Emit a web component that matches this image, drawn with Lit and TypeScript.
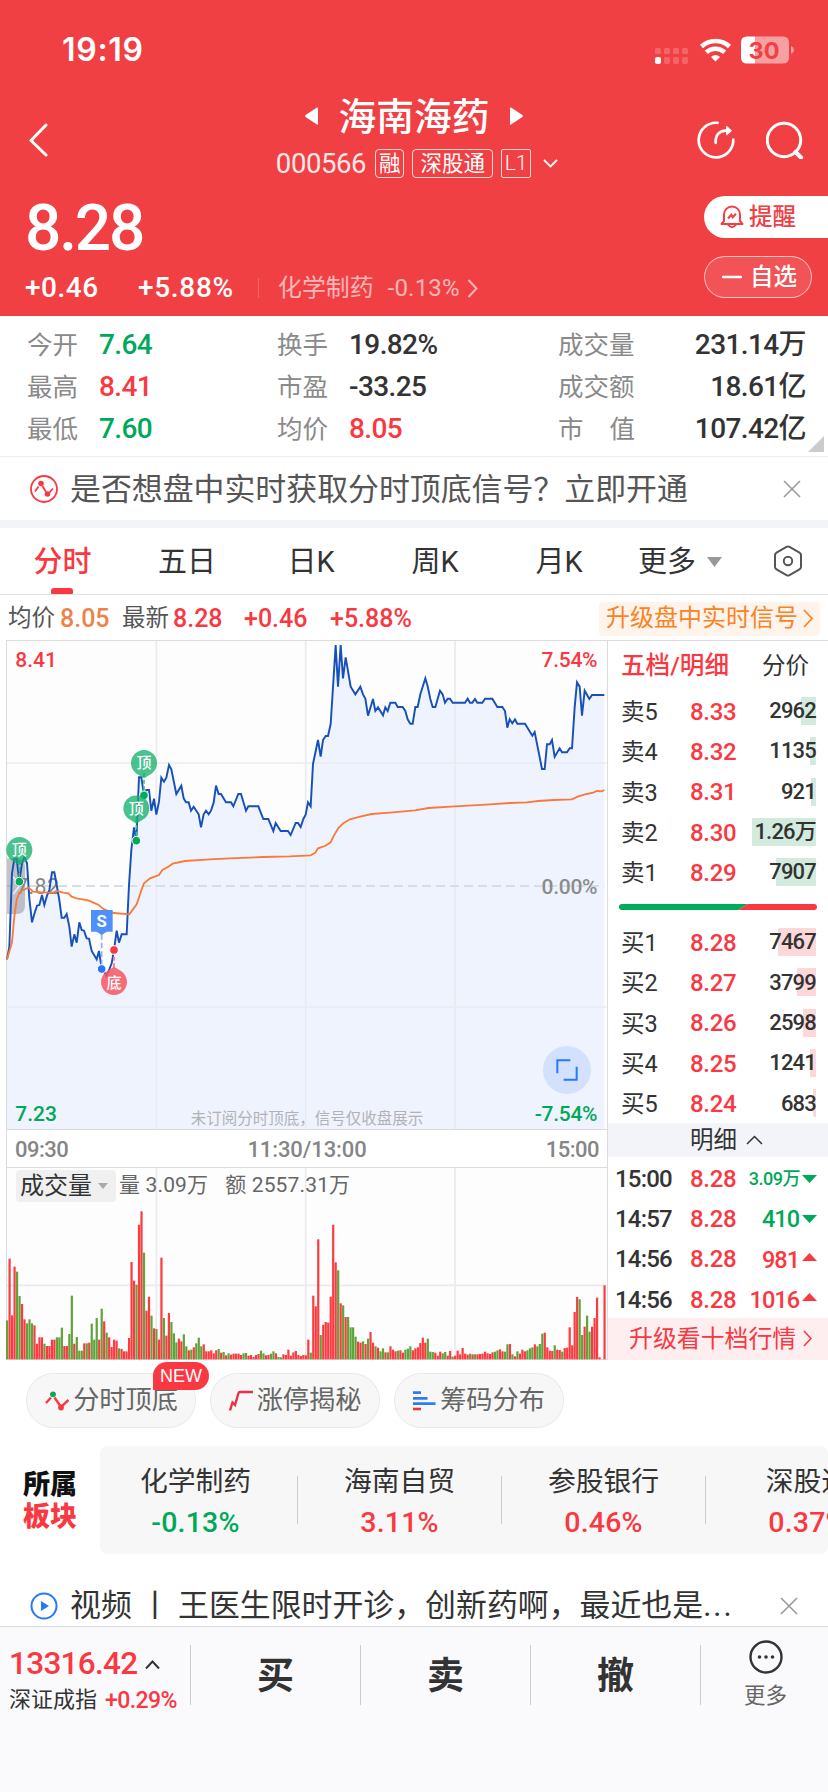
import { LitElement, html, svg, css } from "lit";
import { customElement } from "lit/decorators.js";

const PRICE =
  "21,988 28,950 36,730 43,686 50,686 58,755 66,700 73,680 81,700 88,805 96,877 103,852 111,827 118,825 126,795 133,825 141,797 148,780 156,727 163,727 170,765 178,810 185,863 193,863 200,852 208,890 215,950 223,913 230,938 238,877 245,900 252,902 260,925 267,926 275,963 290,988 297,963 305,1015 320,1038 335,1000 342,960 350,902 357,938 365,913 380,913 387,765 394,660 402,592 409,632 417,442 424,442 432,496 439,480 447,480 454,542 462,506 469,554 477,515 484,443 492,455 499,443 507,405 514,418 529,492 544,467 551,505 558,517 566,517 573,542 581,530 596,553 603,592 611,553 618,542 626,553 633,542 641,518 648,467 656,492 663,492 678,517 693,517 700,529 715,492 723,492 738,542 745,529 775,529 790,567 805,567 820,603 827,579 842,603 864,603 872,615 887,579 894,579 902,591 910,567 917,554 924,517 932,529 939,402 954,330 962,380 969,330 977,318 984,318 992,282 1007,45 1014,170 1022,45 1029,145 1037,82 1052,170 1066,193 1081,170 1089,193 1096,206 1104,257 1119,207 1126,243 1134,232 1149,256 1156,232 1163,243 1171,218 1186,218 1193,231 1208,231 1216,243 1223,268 1231,281 1238,281 1246,231 1253,231 1261,193 1276,145 1283,169 1291,207 1298,231 1306,231 1320,182 1328,193 1335,218 1343,206 1350,206 1358,218 1395,218 1403,206 1410,218 1417,218 1425,207 1432,218 1447,218 1455,206 1477,206 1492,231 1507,231 1515,243 1522,293 1529,268 1537,280 1545,268 1552,281 1575,281 1597,317 1604,306 1626,417 1634,417 1641,343 1649,343 1656,330 1664,380 1679,355 1686,367 1701,367 1709,355 1716,355 1724,232 1731,157 1739,170 1746,257 1754,182 1768,207 1776,195 1813,195";

const AVERAGE =
  "21,988 36,937 43,860 50,810 58,788 66,782 85,773 100,785 125,787 160,788 170,783 190,788 205,790 215,800 230,805 265,811 280,818 295,824 312,838 342,849 388,853 410,823 418,800 425,778 432,760 450,745 477,735 487,720 505,710 518,701 555,693 630,688 690,685 790,681 870,679 932,676 946,668 954,655 975,648 992,637 1000,620 1015,594 1030,580 1050,568 1080,560 1115,552 1170,548 1245,541 1285,534 1365,529 1470,523 1530,519 1580,517 1615,513 1660,510 1715,508 1735,499 1760,492 1780,488 1790,483 1805,484 1813,480";

/* One entry per minute: direction (r rising, g falling) and bar height. */
const VOLUME =
  "g117 r302 r132 r278 g263 g190 r166 r120 g108 g120 g108 r102 r47 r66 r66 g47 r40 r40 r59 r59 g66 g66 g95 r40 r40 g76 g191 r47 g67 g26 g26 r48 g48 r50 g107 g59 g124 r59 g152 r114 g80 r66 r37 r59 r56 g33 r31 r24 r24 r64 r292 r236 g224 r404 r444 g320 r146 r188 g131 r93 g91 r59 r305 g124 r71 r139 g112 g78 g51 r62 r54 g75 g39 r27 g29 r36 g48 g65 g39 r45 r24 r24 r27 r18 r27 g31 r20 g22 r12 g18 r14 r17 r17 r17 r13 g18 g19 r11 r13 r7 r13 r16 g26 g18 r12 r13 g17 g24 r18 g7 g6 r15 r13 r29 r11 r21 r25 r13 r10 r13 r12 r59 g20 r191 r159 r360 g73 r104 r112 r110 r188 r404 r291 g267 r168 g162 r127 g127 g96 g96 g68 r53 r50 g54 r46 g62 r82 r50 g39 r35 g24 g33 r21 g21 r39 r29 r24 g26 r27 r20 g29 g32 g39 r27 r33 r36 r49 r65 r50 g62 g23 g22 r20 r11 r23 g18 g22 r11 r25 g8 r11 r26 r15 r34 r17 r14 g17 r15 g15 r15 r16 r17 r23 r18 r16 r21 g23 g27 r30 r24 g23 g45 r46 g15 r9 g24 r17 r29 r24 g27 g33 g36 r45 g39 g46 g77 r80 r36 r26 r25 g42 r29 r28 g23 r34 r35 r96 r42 r142 r187 g180 g73 r98 g131 g83 r98 r124 r185 r6 r0 r222"
    .split(" ")
    .map((s) => ({ up: s[0] === "r", h: Number(s.slice(1)) }));

const ASKS = [
  ["卖5", "8.33", "2962", 15],
  ["卖4", "8.32", "1135", 6],
  ["卖3", "8.31", "921", 5],
  ["卖2", "8.30", "1.26万", 64],
  ["卖1", "8.29", "7907", 40],
];
const BIDS = [
  ["买1", "8.28", "7467", 38],
  ["买2", "8.27", "3799", 19],
  ["买3", "8.26", "2598", 13],
  ["买4", "8.25", "1241", 6],
  ["买5", "8.24", "683", 3],
];
const DEALS = [
  ["15:00", "8.28", "3.09万", "down", "small"],
  ["14:57", "8.28", "410", "down", ""],
  ["14:56", "8.28", "981", "up", ""],
  ["14:56", "8.28", "1016", "up", ""],
];
const SECTORS = [
  ["化学制药", "-0.13%", "green"],
  ["海南自贸", "3.11%", "red"],
  ["参股银行", "0.46%", "red"],
  ["深股通", "0.37%", "red"],
];

const base = css`
  :host {
    display: block;
    box-sizing: border-box;
    font-family: Roboto, "Noto Sans CJK SC", sans-serif;
    line-height: 1.2;
    color: #333;
  }
  * {
    box-sizing: border-box;
  }
  svg {
    display: block;
    flex: none;
  }
  .row {
    display: flex;
    align-items: center;
    white-space: nowrap;
  }
  .red {
    color: #f93842;
  }
  .green {
    color: #00a85a;
  }
`;

@customElement("stock-header")
class StockHeader extends LitElement {
  static styles = [
    base,
    css`
      :host {
        height: 316px;
        background: #f04043;
        color: #fff;
      }
      .status {
        height: 92px;
        padding: 8px 34px 0 62px;
        justify-content: space-between;
      }
      .time {
        font: 600 32px/40px Inter, sans-serif;
        letter-spacing: 0.7px;
      }
      .nav {
        display: grid;
        grid-template-columns: 1fr auto 1fr;
        align-items: center;
        height: 96px;
      }
      .back {
        padding-left: 28px;
      }
      .title {
        height: 46px;
        justify-content: center;
        gap: 20px;
        font-size: 37.8px;
        font-weight: 500;
      }
      .title span {
        padding-top: 3px;
      }
      .sub {
        height: 48px;
        padding-left: 6px;
        justify-content: center;
      }
      .code {
        font-size: 27.5px;
        letter-spacing: -0.4px;
        opacity: 0.88;
        margin-right: 9px;
      }
      .tag {
        height: 29px;
        border: 1.5px solid rgba(255, 255, 255, 0.8);
        border-radius: 4px;
        font-size: 21.5px;
        line-height: 27px;
        text-align: center;
        margin-right: 8px;
      }
      .t1 {
        width: 29px;
      }
      .t2 {
        width: 81px;
      }
      .t3 {
        width: 30px;
        font-size: 21px;
        font-weight: 300;
        border-radius: 2px;
        margin-right: 12px;
      }
      .tools {
        justify-content: flex-end;
        gap: 31px;
        padding-right: 24px;
      }
      .quote {
        display: flex;
        justify-content: space-between;
        padding-top: 8px;
      }
      .price {
        height: 64px;
        font-size: 64px;
        line-height: 66px;
        font-weight: 500;
        padding-left: 25px;
        letter-spacing: -2.2px;
      }
      .chg {
        height: 40px;
        margin-top: 8px;
        padding-left: 25px;
        font-size: 28px;
        font-weight: 500;
      }
      .amt {
        width: 113px;
        letter-spacing: 0.5px;
      }
      .pct {
        width: 120px;
        letter-spacing: 0.7px;
      }
      .sector {
        border-left: 1.5px solid rgba(255, 255, 255, 0.35);
        height: 20px;
        padding-left: 19px;
        font-size: 23.9px;
        font-weight: 400;
        opacity: 0.62;
      }
      .sector b {
        font-weight: 400;
        font-size: 24px;
        letter-spacing: 0.2px;
        margin: 0 7px 0 14px;
      }
      .pills {
        width: 124px;
        display: flex;
        flex-direction: column;
        gap: 18px;
      }
      .pill {
        height: 42px;
        font-size: 23.5px;
        font-weight: 500;
      }
      .remind {
        background: #fff;
        color: #f04043;
        border-radius: 21px 0 0 21px;
        padding-left: 16px;
        gap: 5px;
      }
      .fav {
        width: 108px;
        border: 1px solid rgba(255, 255, 255, 0.65);
        background: rgba(255, 255, 255, 0.1);
        border-radius: 21px;
        padding-left: 17px;
        gap: 8px;
      }
    `,
  ];
  render() {
    return html`
      <div class="row status">
        <span class="time">19:19</span>
        <svg width="140" height="28" viewBox="0 0 140 28">
          ${[0, 9, 18, 27].map(
            (x) => svg`
              <rect x=${x + 1} y="12" width="6" height="6" rx="1.5" fill="#fff" opacity=".2"/>
              <rect x=${x + 1} y="21" width="6" height="7" rx="2" fill="#fff" opacity=${x ? 0.2 : 1}/>`,
          )}
          <g fill="none" stroke="#fff" stroke-width="4.6">
            <path d="M47.5 10.5 A20.5 20.5 0 0 1 75.5 10.5" />
            <path d="M52.3 16.3 A13.5 13.5 0 0 1 70.7 16.3" />
          </g>
          <path d="M61.5 25.5 L57 21 Q61.5 17 66 21 Z" fill="#fff" />
          <path d="M101 .5 H129 Q135 .5 135 6.500 V21.500 Q135 27.500 129 27.500 H101 Z" fill="#fff" opacity=".5" />
          <path d="M101 .5 H93 Q87 .5 87 6.500 V21.500 Q87 27.500 93 27.500 H101 Z" fill="#fff" />
          <path d="M137 10 Q140 11.500 140 14 Q140 16.500 137 18 Z" fill="#fff" opacity=".5" />
          <text x="110" y="22.500" text-anchor="middle" font-family="Inter" font-weight="700" font-size="23.500" fill="#f04043">30</text>
        </svg>
      </div>
      <div class="nav">
        <div class="back">
          <svg width="20" height="34" viewBox="0 0 20 34">
            <path d="M18 2 L3 17.500 L18 32" fill="none" stroke="#fff" stroke-width="3" stroke-linecap="round" stroke-linejoin="round" />
          </svg>
        </div>
        <div>
          <div class="row title">
            <svg width="13" height="18" viewBox="0 0 13 18"><path d="M13 1 V17 Q13 18 12 17.400 L.6 10 Q-.3 9 .6 8 L12 .6 Q13 0 13 1Z" fill="#fff" /></svg>
            <span>海南海药</span>
            <svg width="13" height="18" viewBox="0 0 13 18"><path d="M0 1 V17 Q0 18 1 17.400 L12.400 10 Q13.300 9 12.400 8 L1 .6 Q0 0 0 1Z" fill="#fff" /></svg>
          </div>
          <div class="row sub">
            <span class="code">000566</span>
            <span class="tag t1">融</span>
            <span class="tag t2">深股通</span>
            <span class="tag t3">L1</span>
            <svg width="15" height="9" viewBox="0 0 15 9"><path d="M1 1 L7.500 7.500 L14 1" fill="none" stroke="#fff" stroke-width="1.800" /></svg>
          </div>
        </div>
        <div class="row tools">
          <svg width="38" height="38" viewBox="0 0 38 38" fill="none" stroke="#fff" stroke-width="2.700" stroke-linecap="round" stroke-linejoin="round">
            <path d="M20.500 1.800 A17.300 17.300 0 1 0 36.300 18.700" />
            <path d="M18.700 21.800 C18.300 14 22 9.800 29 9.600" />
            <path d="M29.800 5.800 L34 9.700 L29.800 13.500 Z" fill="#fff" stroke-width="1.500" />
          </svg>
          <svg width="38" height="38" viewBox="0 0 38 38" fill="none" stroke="#fff" stroke-width="3">
            <circle cx="18" cy="19" r="16.700" />
            <path d="M29.500 31 L35 36.500" stroke-width="4.200" stroke-linecap="round" />
          </svg>
        </div>
      </div>
      <div class="quote">
        <div>
          <div class="price">8.28</div>
          <div class="row chg">
            <span class="amt">+0.46</span><span class="pct">+5.88%</span>
            <span class="row sector">化学制药<b>-0.13%</b>
              <svg width="11" height="19" viewBox="0 0 11 19"><path d="M1.500 1 L9.500 9.500 L1.500 18" fill="none" stroke="#fff" stroke-width="2" /></svg>
            </span>
          </div>
        </div>
        <div class="pills">
          <div class="row pill remind">
            <svg width="24" height="26" viewBox="0 0 24 26" fill="none" stroke="#f04043" stroke-width="2">
              <path d="M4 17 V10.500 A8 8 0 0 1 20 10.500 V17 L22.500 20 H1.500 Z" stroke-linejoin="round" />
              <path d="M8 20.500 Q12 26 16 20.500" />
              <path d="M8 14.500 L11.300 10.800 L12.700 13.300 L16 9.800" />
            </svg>
            提醒
          </div>
          <div class="row pill fav">
            <svg width="20" height="4"><path d="M1 2 H19" stroke="#fff" stroke-width="2.400" stroke-linecap="round" /></svg>
            自选
          </div>
        </div>
      </div>
    `;
  }
}

@customElement("stock-chart")
class StockChart extends LitElement {
  static styles = [
    base,
    css`
      :host {
        width: 608px;
        flex: none;
        padding-left: 6px;
      }
      .times {
        height: 37px;
        border: 1px solid #dcdcdc;
        border-bottom: none;
        border-top: none;
        padding: 3px 8px 0 8px;
        justify-content: space-between;
        font-size: 22px;
        font-weight: 500;
        letter-spacing: -0.5px;
        color: #858585;
      }
      .mid {
        letter-spacing: -0.1px;
      }
      .vol {
        position: relative;
      }
      .legend {
        position: absolute;
        left: 10px;
        top: 3px;
        height: 32px;
        font-size: 21px;
        color: #666;
      }
      .pick {
        width: 100px;
        height: 32px;
        padding-left: 4px;
        gap: 6px;
        background: #f0f0f0;
        border-radius: 4px;
        font-size: 24px;
        color: #333;
        margin-right: 3px;
      }
      .amount {
        margin-left: 17px;
      }
      .legend span {
        letter-spacing: 0.15px;
      }
      text {
        font-family: Roboto, "Noto Sans CJK SC", sans-serif;
      }
    `,
  ];

  pin(x: number, y: number, dotY: number) {
    return svg`
      <path d=${`M${x} ${y + 30} V${dotY}`} stroke="#40be82" stroke-width="5" stroke-dasharray="12 8"/>
      <path d=${`M${x - 21} ${y + 33} L${x} ${y + 46} L${x + 21} ${y + 33} A39 39 0 1 0 ${x - 21} ${y + 33}Z`}
        fill="#14b06b" fill-opacity=".77"/>
      <text x=${x} y=${y + 16} text-anchor="middle" font-size="45" font-weight="500" fill="#fff">顶</text>
      <circle cx=${x} cy=${dotY} r="13" fill="#00ab5a" stroke="#fff" stroke-width="3"/>`;
  }

  render() {
    return html`
      <svg width="602" height="490" viewBox="18 30 1806 1470">
        <rect x="19.500" y="31.500" width="1803" height="1467" fill="#fdfdfe" />
        <path d=${`M21 1497 L${PRICE.replace(/ /g, " L")} V1497 Z`} fill="#eff3fe" />
        <path d="M469 32 V1498 M917 32 V1498 M1365 32 V1498 M20 399 H1820 M20 1131 H1820" fill="none" stroke="#e9ebef" stroke-width="5" />
        <path d="M20 768 H1813" stroke="#d3deeb" stroke-width="6" stroke-dasharray="27 15" stroke-dashoffset="14" />
        <rect x="19.500" y="31.500" width="1803" height="1467" fill="none" stroke="#dcdcdc" stroke-width="3" />
        <text x="48" y="791" font-size="64" letter-spacing="1.5" fill="#858585">7.82</text>
        <path d="M21 685 H50 Q75 685 75 710 V827 Q75 852 50 852 H21 Z" fill="#84868e" fill-opacity=".48" />
        <path d="M39 740 L60 765 L39 793" fill="none" stroke="#fff" stroke-opacity=".7" stroke-width="5" />
        <polyline points=${PRICE} fill="none" stroke="#1750b8" stroke-width="5.800" />
        <polyline points=${AVERAGE} fill="none" stroke="#fa7838" stroke-width="5.400" />
        ${this.pin(58, 660, 755)} ${this.pin(432, 399, 496)} ${this.pin(409, 535, 632)}
        <path d="M305 912 V1010" stroke="#8cb0f8" stroke-width="5" stroke-dasharray="17 9" />
        <path d="M273 840 H338 V905 H320 L305 915 L290 905 H273 Z" fill="#4f90fd" />
        <text x="305" y="891" text-anchor="middle" font-size="50" font-weight="700" fill="#fff">S</text>
        <circle cx="305" cy="1017" r="13" fill="#2678fa" stroke="#fff" stroke-width="3" />
        <path d="M342 960 V1015" stroke="#f97680" stroke-width="5" stroke-dasharray="12 8" />
        <path d="M321 1023 L342 1010 L363 1023 A39 39 0 1 1 321 1023Z" fill="#f75562" fill-opacity=".85" />
        <text x="342" y="1073" text-anchor="middle" font-size="45" font-weight="500" fill="#fff">底</text>
        <circle cx="342" cy="960" r="13" fill="#f93842" stroke="#fff" stroke-width="3" />
        <g font-size="63" font-weight="500">
          <text x="46" y="110" fill="#f93842">8.41</text>
          <text x="1792" y="110" text-anchor="end" letter-spacing="-.8" fill="#f93842">7.54%</text>
          <text x="1792" y="791" text-anchor="end" letter-spacing="-.8" fill="#8c8c8c">0.00%</text>
          <text x="46" y="1473" fill="#00a85a">7.23</text>
          <text x="1792" y="1473" text-anchor="end" letter-spacing="-.8" fill="#00a85a">-7.54%</text>
        </g>
        <text x="572" y="1483" font-size="46.500" fill="#b2b2b6">未订阅分时顶底，信号仅收盘展示</text>
        <circle cx="1701" cy="1320" r="72" fill="#d3e0fe" />
        <path d="M1672 1330 V1291 H1711 M1730 1310 V1349 H1691" fill="none" stroke="#2678fa" stroke-width="6" />
      </svg>
      <div class="row times"><span>09:30</span><span class="mid">11:30/13:00</span><span>15:00</span></div>
      <div class="vol">
        <svg width="602" height="193" viewBox="18 0 1806 579">
          <rect x="19.500" y="1.500" width="1803" height="576" fill="#fdfdfe" stroke="#dcdcdc" stroke-width="3" />
          <path d="M469 3 V578 M917 3 V578 M1365 3 V578 M20 355 H1820" stroke="#ebebed" stroke-width="5" />
          ${VOLUME.map(
            (v, i) => svg`<rect x=${18 + i * 7.468} y=${577 - v.h} width="6.6" height=${v.h}
              fill=${v.up ? "#fb3b40" : "#5fa33a"}/>`,
          )}
        </svg>
        <div class="row legend">
          <div class="row pick">成交量
            <svg width="10" height="6"><path d="M0 0 H10 L5 6Z" fill="#aaa" /></svg>
          </div>
          <span>量 3.09万</span><span class="amount">额 2557.31万</span>
        </div>
      </div>
    `;
  }
}

@customElement("order-book")
class OrderBook extends LitElement {
  static styles = [
    base,
    css`
      :host {
        flex: none;
        width: 220px;
        height: 720px;
        border-top: 1px solid #dcdcdc;
        background: #fff;
      }
      .head {
        height: 50px;
        padding: 0 19px 0 13px;
        justify-content: space-between;
        font-size: 23.5px;
      }
      .head b {
        font-weight: 500;
        font-size: 24.6px;
      }
      .line {
        height: 40.3px;
        padding-right: 12px;
      }
      .name {
        flex: none;
        width: 82px;
        padding: 2px 0 0 13px;
        font-size: 23.5px;
      }
      .px {
        flex: none;
        width: 60px;
        padding-top: 2px;
        font-size: 24px;
        font-weight: 500;
        letter-spacing: -0.3px;
      }
      .qty {
        flex: 1;
        min-width: 0;
        height: 28px;
        display: flex;
        align-items: center;
        justify-content: flex-end;
        font-size: 22px;
        font-weight: 500;
        letter-spacing: -0.8px;
      }
      .ask,
      .bid {
        background: linear-gradient(#d2ebde, #d2ebde) right / var(--w) 100% no-repeat;
      }
      .bid {
        padding-top: 1px;
        background-image: linear-gradient(#fdd8da, #fdd8da);
      }
      .ratio {
        height: 29.5px;
        padding: 0 11px;
      }
      .band {
        height: 33.5px;
        justify-content: center;
        padding-left: 17px;
        gap: 9px;
        background: #f3f4f9;
        font-size: 23.5px;
      }
      .deals {
        height: 161px;
        padding-top: 2px;
      }
      .clock {
        flex: none;
        width: 82px;
        padding-left: 7px;
        font-size: 24px;
        font-weight: 500;
        letter-spacing: -0.8px;
      }
      .deals .px {
        padding-top: 0;
      }
      .deals .line {
        padding-right: 11px;
      }
      .deals .qty {
        gap: 3px;
        font-size: 23.5px;
        letter-spacing: -1px;
      }
      .deals .small {
        gap: 2px;
        font-size: 18px;
        letter-spacing: -0.5px;
      }
      .up svg {
        margin-bottom: 6px;
      }
      .more {
        height: 42px;
        padding-left: 21px;
        gap: 7px;
        background: #feeef0;
        font-size: 23.9px;
      }
    `,
  ];
  level(rows: any[], kind: string) {
    return rows.map(
      ([n, p, q, w]) => html`
        <div class="row line">
          <span class="name">${n}</span><span class="px red">${p}</span>
          <span class="qty ${kind}" style="--w:${w}px">${q}</span>
        </div>`,
    );
  }
  render() {
    return html`
      <div class="row head"><b class="red">五档/明细</b><span>分价</span></div>
      ${this.level(ASKS, "ask")}
      <div class="row ratio">
        <svg width="198" height="6" viewBox="0 0 198 6">
          <path d="M3 0 H129 L119 6 H3 A3 3 0 0 1 3 0Z" fill="#00ab5a" />
          <path d="M129 0 H195 A3 3 0 0 1 195 6 H119Z" fill="#f93842" />
        </svg>
      </div>
      ${this.level(BIDS, "bid")}
      <div class="row band">明细
        <svg width="17" height="10" viewBox="0 0 17 10"><path d="M1 9 L8.500 1.500 L16 9" fill="none" stroke="#333" stroke-width="1.500" /></svg>
      </div>
      <div class="deals">
        ${DEALS.map(
          ([t, p, q, dir, size]) => html`
            <div class="row line">
              <span class="clock">${t}</span><span class="px red">${p}</span>
              <span class="qty ${dir} ${size} ${dir === "up" ? "red" : "green"}">${q}
                <svg width="15" height="8" viewBox="0 0 15 8">
                  <path d=${dir === "up" ? "M0 8 L7.500 0 L15 8Z" : "M0 0 H15 L7.500 8Z"} fill="currentColor" />
                </svg>
              </span>
            </div>`,
        )}
      </div>
      <div class="row more red">升级看十档行情
        <svg width="9" height="17" viewBox="0 0 9 17"><path d="M1 1 L8 8.500 L1 16" fill="none" stroke="#f93842" stroke-width="1.600" /></svg>
      </div>
    `;
  }
}

@customElement("app-root")
class AppRoot extends LitElement {
  static styles = [
    base,
    css`
      :host {
        width: 828px;
        height: 1792px;
        overflow: hidden;
        background: #fff;
      }
      .stats {
        position: relative;
        display: grid;
        grid-template-columns: 250px 281px 248px;
        grid-auto-rows: 42px;
        height: 141px;
        padding: 8px 0 0 27px;
        border-bottom: 1.5px solid #ececee;
        font-size: 28px;
        font-weight: 500;
        letter-spacing: -0.6px;
      }
      .stats .k {
        width: 72px;
        font-size: 25.5px;
        font-weight: 400;
        letter-spacing: 0;
        color: #8a8a8a;
      }
      .stats .wide {
        display: flex;
        justify-content: space-between;
        width: 77px;
      }
      .last {
        justify-content: space-between;
      }
      .corner {
        position: absolute;
        right: 4px;
        bottom: 4px;
      }
      .notice {
        height: 63px;
        padding: 0 27px 0 29px;
        font-size: 30.9px;
        color: #555;
      }
      .notice span {
        flex: 1;
        padding: 2px 0 0 11px;
      }
      .gap {
        height: 8px;
        background: #f2f4f9;
      }
      .tabs {
        height: 67px;
        border-bottom: 1.5px solid #e2e2e2;
        font-size: 29px;
      }
      .tab {
        width: 124px;
        height: 66px;
        line-height: 68px;
        text-align: center;
      }
      .on {
        width: 125px;
        position: relative;
        font-weight: 500;
      }
      .on i {
        position: absolute;
        left: 51px;
        bottom: 0;
        width: 22px;
        height: 6px;
        border-radius: 3px 3px 1px 1px;
        background: #f93842;
      }
      .pick {
        width: 135px;
        margin-left: 17px;
        padding-top: 2px;
        gap: 11px;
      }
      .info {
        height: 45px;
        padding: 2px 8px 0;
        font-size: 23.5px;
        color: #555;
      }
      .info b {
        font-size: 25px;
        font-weight: 500;
      }
      .avg {
        width: 67px;
        color: #ee8347;
        padding-left: 5px;
      }
      .now {
        width: 75px;
        padding-left: 4px;
      }
      .diff {
        width: 86px;
      }
      .up {
        margin-left: auto;
        width: 221px;
        height: 34px;
        padding-left: 7px;
        gap: 5px;
        background: #fff4ec;
        border-radius: 4px;
        font-size: 24px;
        color: #f98325;
      }
      .main {
        display: flex;
        height: 720px;
      }
      .chips {
        padding: 13px 0 0 26px;
        gap: 14px;
      }
      .chip {
        position: relative;
        width: 170px;
        height: 55px;
        padding-top: 1px;
        border: 1px solid #e8e8e8;
        border-radius: 28px;
        background: #f7f7f7;
        justify-content: center;
        gap: 4px;
        font-size: 26.2px;
        color: #666;
      }
      .lead {
        padding-left: 5px;
      }
      .new {
        position: absolute;
        left: 126px;
        top: -12px;
        width: 56px;
        height: 28px;
        border-radius: 14px 14px 14px 0;
        background: #f93842;
        color: #fff;
        font: 18px/28px "Liberation Sans", sans-serif;
        text-align: center;
      }
      .plates {
        padding-top: 18px;
      }
      .cap {
        width: 100px;
        padding-left: 23px;
        padding-top: 2px;
        font-size: 27px;
        line-height: 31px;
        font-weight: 900;
        color: #111;
      }
      .cap div {
        margin-top: 1px;
      }
      .list {
        width: 728px;
        height: 108px;
        overflow: hidden;
        background: #f7f7f7;
        border-radius: 8px;
      }
      .plate {
        flex: none;
        width: 204px;
        height: 48px;
        padding-top: 4px;
        display: flex;
        flex-direction: column;
        justify-content: center;
        align-items: center;
        border-right: 1px solid #ccc;
        font-size: 27.8px;
        line-height: 41px;
      }
      .plate:first-child {
        margin-left: -6px;
      }
      .plate b {
        font-weight: 500;
        font-size: 28.5px;
        letter-spacing: 0.2px;
      }
      .video {
        height: 72px;
        padding: 31px 30px 0 29px;
        font-size: 30.9px;
      }
      .video span {
        padding-left: 11px;
        flex: 1;
      }
      .video em {
        font-style: normal;
        letter-spacing: 2px;
      }
      .foot {
        height: 166px;
        border-top: 1.5px solid #d8d8da;
        background: #fafafc;
        align-items: flex-start;
        padding-top: 18px;
      }
      .index {
        width: 191px;
        height: 60px;
        border-right: 1px solid #ccc;
        padding-left: 9px;
        font-size: 22px;
      }
      .index .row {
        height: 38px;
        gap: 8px;
      }
      .index .val {
        font-size: 31.500px;
        font-weight: 500;
        letter-spacing: -0.7px;
      }
      .index b {
        font-size: 23px;
        font-weight: 500;
        letter-spacing: -0.6px;
      }
      .index .row + .row {
        height: 35px;
      }
      .act {
        width: 170px;
        height: 60px;
        border-right: 1px solid #ccc;
        line-height: 64px;
        text-align: center;
        font-size: 37px;
        font-weight: 700;
      }
      .etc {
        width: 127px;
        padding-left: 2px;
        display: flex;
        flex-direction: column;
        align-items: center;
        font-size: 21.5px;
        color: #666;
        line-height: 38px;
        margin-top: -5px;
      }
      .etc svg {
        margin-bottom: 3px;
      }
    `,
  ];
  render() {
    const close = html`<svg width="18" height="18" viewBox="0 0 18 18"><path d="M1 1 L17 17 M17 1 L1 17" stroke="#999" stroke-width="1.600" /></svg>`;
    const stat = (k: string, v: string, c = "") => html`<div class="row"><span class="k">${k}</span><span class=${c}>${v}</span></div>`;
    const total = (k: string, v: string) => html`<div class="row last"><span class="k wide">${k.split(" ").map((s) => html`<span>${s}</span>`)}</span><span>${v}</span></div>`;
    return html`
      <stock-header></stock-header>
      <div class="stats">
        ${stat("今开", "7.64", "green")} ${stat("换手", "19.82%")} ${total("成交量", "231.14万")}
        ${stat("最高", "8.41", "red")} ${stat("市盈", "-33.25")} ${total("成交额", "18.61亿")}
        ${stat("最低", "7.60", "green")} ${stat("均价", "8.05", "red")} ${total("市 值", "107.42亿")}
        <svg class="corner" width="16" height="16"><path d="M16 0 V16 H0Z" fill="#ccc" /></svg>
      </div>
      <div class="row notice">
        <svg width="30" height="30" viewBox="0 0 30 30">
          <circle cx="15" cy="15" r="13" fill="none" stroke="#f93842" stroke-width="1.800" />
          <path d="M6 17.500 L9.500 12.500 M13.500 12 L17 18 M20.500 18.500 L24 14.500" fill="none" stroke="#f93842" stroke-width="1.800" />
          <circle cx="12" cy="9.500" r="2.800" fill="#f93842" /><circle cx="18.500" cy="20" r="2.800" fill="#f93842" />
        </svg>
        <span>是否想盘中实时获取分时顶底信号？立即开通</span>${close}
      </div>
      <div class="gap"></div>
      <div class="row tabs">
        <div class="tab on red">分时<i></i></div>
        <div class="tab">五日</div><div class="tab">日K</div><div class="tab">周K</div><div class="tab">月K</div>
        <div class="row pick">更多<svg width="15" height="10"><path d="M0 0 H15 L7.500 10Z" fill="#999" /></svg></div>
        <svg width="30" height="32" viewBox="0 0 30 32" fill="none" stroke="#555" stroke-width="2">
          <path d="M13.500 1.800 Q15 1 16.500 1.800 L26.500 7.600 Q28 8.500 28 10 V22 Q28 23.500 26.500 24.400 L16.500 30.200 Q15 31 13.500 30.200 L3.500 24.400 Q2 23.500 2 22 V10 Q2 8.500 3.500 7.600Z" />
          <circle cx="15" cy="16" r="4.200" />
        </svg>
      </div>
      <div class="row info">
        均价<b class="avg">8.05</b><span>最新</span><b class="now red">8.28</b>
        <b class="diff red">+0.46</b><b class="red">+5.88%</b>
        <div class="row up">升级盘中实时信号<svg width="10" height="19" viewBox="0 0 10 19"><path d="M1 1 L9 9.500 L1 18" fill="none" stroke="#f98325" stroke-width="1.700" /></svg></div>
      </div>
      <div class="main"><stock-chart></stock-chart><order-book></order-book></div>
      <div class="row chips">
        <div class="row chip lead">
          <svg width="24" height="20" viewBox="0 0 24 20" fill="none" stroke-width="2.400">
            <path d="M1 12 L6 6.500" stroke="#f93842" /><path d="M9.500 6.500 L16 16 L23.500 9" stroke="#f93842" />
            <circle cx="8" cy="3.300" r="2.900" fill="#00ab5a" /><circle cx="16" cy="16.500" r="2.900" fill="#f93842" />
          </svg>分时顶底<span class="new">NEW</span>
        </div>
        <div class="row chip">
          <svg width="24" height="22" viewBox="0 0 24 22"><path d="M1 20.500 L3.500 12.500 L6 15 L9.500 3 Q9.800 2 11 2 H24" fill="none" stroke="#e83343" stroke-width="2.400" /></svg>涨停揭秘
        </div>
        <div class="row chip">
          <svg width="23" height="20" viewBox="0 0 23 20" fill="none" stroke="#2f7bf6" stroke-width="2.600"><path d="M0 1.600 H8 M0 7.400 H14.500 M0 12.600 H22.500" /><path d="M0 18 H8" stroke="#e83343" /></svg>筹码分布
        </div>
      </div>
      <div class="row plates">
        <div class="cap">所属<div class="red">板块</div></div>
        <div class="row list">
          ${SECTORS.map(([n, v, c]) => html`<div class="plate"><span>${n}</span><b class=${c}>${v}</b></div>`)}
        </div>
      </div>
      <div class="row video">
        <svg width="30" height="30" viewBox="0 0 30 30"><circle cx="15" cy="15" r="12.500" fill="none" stroke="#2678fa" stroke-width="2" /><path d="M12 10 L20 15 L12 20Z" fill="#2678fa" /></svg>
        <span>视频 丨 王医生限时开诊，创新药啊，最近也是<em>...</em></span>${close}
      </div>
      <div class="row foot">
        <div class="index">
          <div class="row"><span class="val red">13316.42</span><svg width="15" height="9" viewBox="0 0 15 9"><path d="M1 8.500 L7.500 1.500 L14 8.500" fill="none" stroke="#333" stroke-width="2" /></svg></div>
          <div class="row"><span>深证成指</span><b class="red">+0.29%</b></div>
        </div>
        <div class="act">买</div><div class="act">卖</div><div class="act">撤</div>
        <div class="etc">
          <svg width="34" height="34" viewBox="0 0 34 34"><circle cx="17" cy="17" r="15.500" fill="none" stroke="#333" stroke-width="2.400" /><g fill="#333"><circle cx="10.500" cy="17" r="1.800" /><circle cx="17" cy="17" r="1.800" /><circle cx="23.500" cy="17" r="1.800" /></g></svg>
          更多
        </div>
      </div>
    `;
  }
}
